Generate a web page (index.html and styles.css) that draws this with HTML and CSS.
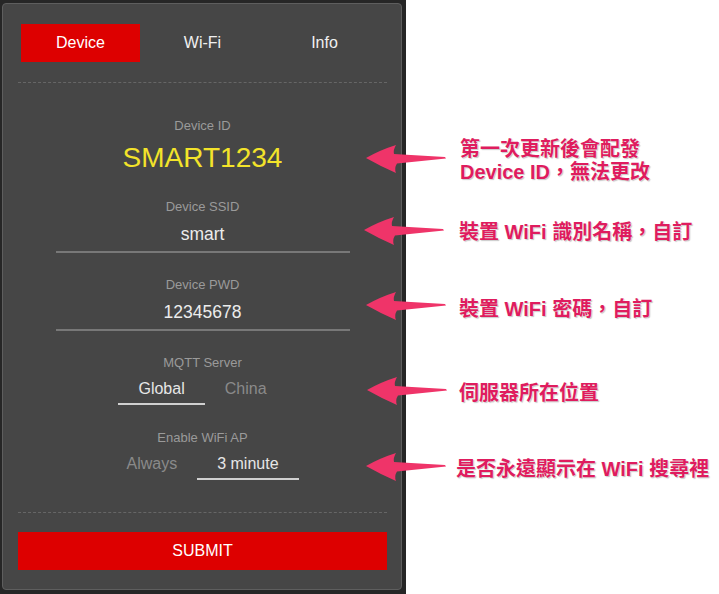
FILE: index.html
```html
<!DOCTYPE html>
<html lang="zh-Hant">
<head>
<meta charset="utf-8">
<title>Device settings</title>
<link rel="stylesheet" href="styles.css">
</head>
<body>
<div class="page">
  <div class="frame">
    <div class="panel">
      <div class="tabs">
        <div class="tab active">Device</div>
        <div class="tab">Wi-Fi</div>
        <div class="tab">Info</div>
      </div>
      <div class="rule"></div>

      <div class="field field-id">
        <div class="label">Device ID</div>
        <div class="device-id">SMART1234</div>
      </div>

      <div class="field field-ssid">
        <div class="label">Device SSID</div>
        <div class="input">smart</div>
      </div>

      <div class="field field-pwd">
        <div class="label">Device PWD</div>
        <div class="input">12345678</div>
      </div>

      <div class="field field-mqtt">
        <div class="label">MQTT Server</div>
        <div class="choices">
          <div class="choice on">Global</div>
          <div class="choice">China</div>
        </div>
      </div>

      <div class="field field-ap">
        <div class="label">Enable WiFi AP</div>
        <div class="choices">
          <div class="choice">Always</div>
          <div class="choice on">3 minute</div>
        </div>
      </div>

      <div class="rule rule-bottom"></div>
      <div class="submit">SUBMIT</div>
    </div>
  </div>
  <div class="notes"></div>

  <svg class="arrow arrow-1" width="81" height="29" viewBox="0 0 81 29"><path d="M0,13 Q14,5 30,0 Q27,5 28,9 L79,12 L80,13.5 L31,18.5 Q28,23 30,28 Q14,21 0,13 Z"/></svg>
  <svg class="arrow arrow-2" width="81" height="29" viewBox="0 0 81 29"><path d="M0,13 Q14,5 30,0 Q27,5 28,9 L79,12 L80,13.5 L31,18.5 Q28,23 30,28 Q14,21 0,13 Z"/></svg>
  <svg class="arrow arrow-3" width="81" height="29" viewBox="0 0 81 29"><path d="M0,13 Q14,5 30,0 Q27,5 28,9 L79,12 L80,13.5 L31,18.5 Q28,23 30,28 Q14,21 0,13 Z"/></svg>
  <svg class="arrow arrow-4" width="81" height="29" viewBox="0 0 81 29"><path d="M0,13 Q14,5 30,0 Q27,5 28,9 L79,12 L80,13.5 L31,18.5 Q28,23 30,28 Q14,21 0,13 Z"/></svg>
  <svg class="arrow arrow-5" width="81" height="29" viewBox="0 0 81 29"><path d="M0,13 Q14,5 30,0 Q27,5 28,9 L79,12 L80,13.5 L31,18.5 Q28,23 30,28 Q14,21 0,13 Z"/></svg>

  <div class="note note-1">第一次更新後會配發<br>Device ID，無法更改</div>
  <div class="note note-2">裝置 WiFi 識別名稱，自訂</div>
  <div class="note note-3">裝置 WiFi 密碼，自訂</div>
  <div class="note note-4">伺服器所在位置</div>
  <div class="note note-5">是否永遠顯示在 WiFi 搜尋裡</div>
</div>
</body>
</html>
```

FILE: styles.css
```css
html, body {
  margin: 0;
  padding: 0;
  background: #ffffff;
}

body {
  font-family: "Liberation Sans", Arial, sans-serif;
}

.page {
  position: relative;
  width: 719px;
  height: 594px;
  display: flex;
  overflow: hidden;
}

.frame {
  width: 406px;
  height: 594px;
  box-sizing: border-box;
  background: #262626;
  padding: 3px 4px 4px 2px;
  flex: none;
}

.panel {
  height: 100%;
  box-sizing: border-box;
  border: 1px solid #5e5e5e;
  border-radius: 4px;
  background: #464646;
  padding: 20px 14px 0 15px;
  display: flex;
  flex-direction: column;
}

.notes {
  flex: 1;
  background: #ffffff;
}

/* Tabs */
.tabs {
  display: grid;
  grid-template-columns: repeat(3, 1fr);
  gap: 3px;
  margin: 0 3px;
}

.tab {
  height: 38px;
  display: flex;
  align-items: center;
  justify-content: center;
  color: #f0f0f0;
  font-size: 16px;
}

.tab.active {
  background: #dd0000;
  color: #ffffff;
}

.rule {
  height: 0;
  border-top: 1px dashed #666666;
  margin-top: 20px;
}

.rule-bottom {
  margin-top: 32px;
}

/* Fields */
.field {
  display: flex;
  flex-direction: column;
  align-items: center;
}

.field-id { margin-top: 35px; }
.field-ssid { margin-top: 25px; }
.field-pwd { margin-top: 24px; }
.field-mqtt { margin-top: 24px; }
.field-ap { margin-top: 25px; }

.label {
  font-size: 13px;
  line-height: 16px;
  color: #9a9a9a;
}

.device-id {
  margin-top: 8px;
  font-size: 28px;
  line-height: 32px;
  color: #f3e32a;
}

.input {
  margin-top: 8px;
  width: 294px;
  text-align: center;
  font-size: 17.5px;
  line-height: 22px;
  color: #ececec;
  padding-bottom: 6px;
  border-bottom: 2px solid #787878;
}

.choices {
  margin-top: 8px;
  display: flex;
  justify-content: center;
}

.choice {
  padding: 0 20px 4px;
  font-size: 16px;
  line-height: 20px;
  color: #8a8a8a;
  border-bottom: 2px solid transparent;
}

.choice.on {
  color: #e6e6e6;
  border-bottom-color: #d0d0d0;
}

.submit {
  margin-top: 19px;
  height: 38px;
  background: #dd0000;
  color: #ffffff;
  font-size: 16px;
  display: flex;
  align-items: center;
  justify-content: center;
}

/* Annotations (overlay) */
.arrow {
  position: absolute;
  fill: #ef3469;
}

.arrow-1 { left: 366px; top: 145px; }
.arrow-2 { left: 364px; top: 217px; }
.arrow-3 { left: 366px; top: 292px; }
.arrow-4 { left: 367px; top: 377px; }
.arrow-5 { left: 366px; top: 453px; }

.note {
  position: absolute;
  font-family: "Liberation Sans", "Noto Sans CJK TC", "Noto Sans CJK SC", sans-serif;
  font-weight: 700;
  font-size: 20px;
  line-height: 23px;
  color: #df1c5e;
  white-space: nowrap;
  text-shadow: 0 0 2px #ffffff, 1px 1px 1px rgba(0, 0, 0, 0.28);
}

.note-1 { left: 460px; top: 138px; }
.note-2 { left: 459px; top: 221px; }
.note-3 { left: 459px; top: 298px; }
.note-4 { left: 459px; top: 382px; }
.note-5 { left: 456px; top: 458px; }
```
